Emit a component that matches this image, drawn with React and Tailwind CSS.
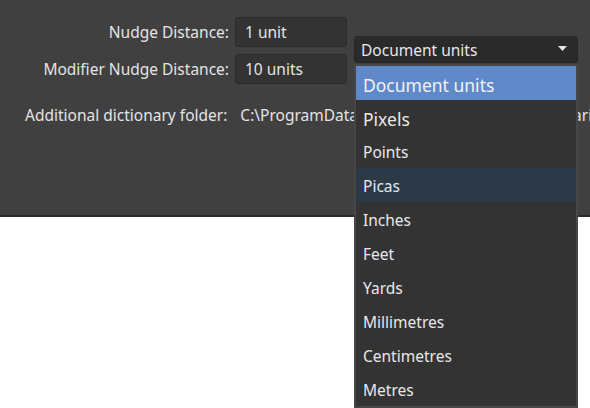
import React from "react";

const items = [
  { label: "Document units", cls: "bg-[#5f89c9] text-[17.5px] text-[#f2f2f2]" },
  { label: "Pixels", cls: "text-[17.5px] text-[#e8e8e8]" },
  { label: "Points", cls: "text-[15.5px] text-[#e8e8e8]" },
  { label: "Picas", cls: "bg-[#2c3947] text-[15.5px] text-[#e8e8e8]" },
  { label: "Inches", cls: "text-[15.5px] text-[#e8e8e8]" },
  { label: "Feet", cls: "text-[15.5px] text-[#e8e8e8]" },
  { label: "Yards", cls: "text-[15.5px] text-[#e8e8e8]" },
  { label: "Millimetres", cls: "text-[15.5px] text-[#e8e8e8]" },
  { label: "Centimetres", cls: "text-[15.5px] text-[#e8e8e8]" },
  { label: "Metres", cls: "text-[15.5px] text-[#e8e8e8]" },
];

export default function App() {
  return (
    <div
      className="relative w-[590px] h-[408px] overflow-hidden bg-white"
      style={{ fontFamily: '"Noto Sans", "Open Sans", sans-serif' }}
    >
      <div className="h-[217px] bg-[#404040] border-b-2 border-[#2a2a2a] pt-[17px] text-[15.5px] text-[#e4e4e4]">
        <div className="flex flex-col gap-[7px]">
          <div className="flex items-center h-[30px]">
            <div className="w-[229px] text-right pt-[2px]">Nudge Distance:</div>
            <div className="ml-[6px] w-[112px] h-[30px] rounded-[3px] border border-[#2a2a2a] bg-[#333333] pl-[9px] pt-[2px] flex items-center">
              1 unit
            </div>
          </div>
          <div className="flex items-center h-[30px]">
            <div className="w-[229px] text-right pt-[2px]">Modifier Nudge Distance:</div>
            <div className="ml-[6px] w-[112px] h-[30px] rounded-[3px] border border-[#2a2a2a] bg-[#333333] pl-[9px] pt-[2px] flex items-center">
              10 units
            </div>
          </div>
        </div>
        <div className="flex items-center mt-[18px] h-[26px] pt-[2px] whitespace-nowrap">
          <span className="w-[4px] -ml-[1px] mr-[26px] overflow-hidden text-[#e05555]">i</span>
          <span>Additional dictionary folder:</span>
          <span className="ml-[13px]">C:\ProgramData\Affinity\Common\1.0\Dictionaries</span>
        </div>
      </div>

      <div className="absolute left-[354px] top-[36px] w-[224px]">
        <div className="h-[27px] rounded-[3px] bg-[#2a2a2a] border border-[#262626] flex items-center pl-[6px] pr-[10px] pt-[2px] text-[15.5px] text-[#e6e6e6]">
          <span className="flex-1">Document units</span>
          <svg width="9" height="5" viewBox="0 0 9 5" className="mb-[5px]">
            <path d="M0 0 L9 0 L4.5 5 Z" fill="#e6e6e6" />
          </svg>
        </div>
        <div className="mt-[1px] border-2 border-[#474747] bg-[#333333] flex flex-col">
          {items.map((it) => (
            <div key={it.label} className={`h-[34px] flex items-center pl-[7px] pt-[4px] ${it.cls}`}>
              {it.label}
            </div>
          ))}
        </div>
      </div>
    </div>
  );
}
